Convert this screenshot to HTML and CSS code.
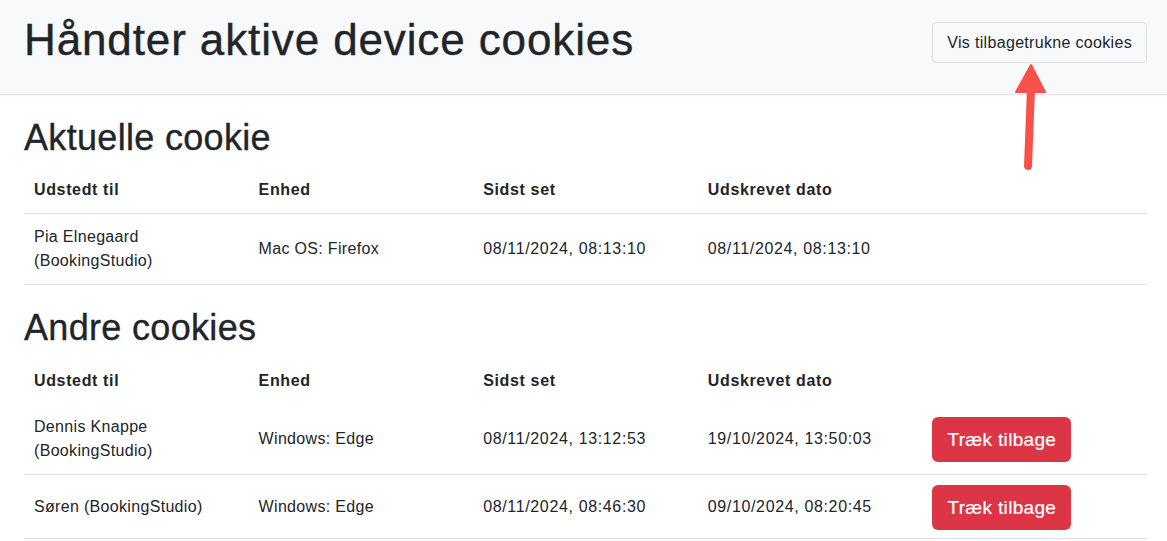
FILE: index.html
```html
<!DOCTYPE html>
<html lang="da">
<head>
<meta charset="utf-8">
<title>Håndter aktive device cookies</title>
<link rel="stylesheet" href="styles.css">
</head>
<body>
<header class="topbar">
  <h1 class="page-title">Håndter aktive device cookies</h1>
  <button class="btn btn-light">Vis tilbagetrukne cookies</button>
</header>
<main class="content">
  <h2 class="section-title first">Aktuelle cookie</h2>
  <table class="cookie-table current">
    <thead>
      <tr><th>Udstedt til</th><th>Enhed</th><th>Sidst set</th><th>Udskrevet dato</th><th></th></tr>
    </thead>
    <tbody>
      <tr><td>Pia Elnegaard (BookingStudio)</td><td>Mac OS: Firefox</td><td class="num">08/11/2024, 08:13:10</td><td class="num">08/11/2024, 08:13:10</td><td></td></tr>
    </tbody>
  </table>
  <h2 class="section-title">Andre cookies</h2>
  <table class="cookie-table other">
    <thead>
      <tr><th>Udstedt til</th><th>Enhed</th><th>Sidst set</th><th>Udskrevet dato</th><th></th></tr>
    </thead>
    <tbody>
      <tr><td>Dennis Knappe (BookingStudio)</td><td>Windows: Edge</td><td class="num">08/11/2024, 13:12:53</td><td class="num">19/10/2024, 13:50:03</td><td class="action"><button class="btn btn-danger">Træk tilbage</button></td></tr>
      <tr><td>Søren (BookingStudio)</td><td>Windows: Edge</td><td class="num">08/11/2024, 08:46:30</td><td class="num">09/10/2024, 08:20:45</td><td class="action"><button class="btn btn-danger">Træk tilbage</button></td></tr>
    </tbody>
  </table>
</main>
<svg class="arrow" width="60" height="120" viewBox="0 0 60 120" aria-hidden="true">
  <line x1="28" y1="101" x2="31" y2="24" stroke="#f9514a" stroke-width="8" stroke-linecap="round"/>
  <polygon points="31,0 45,27 16,27" fill="#f9514a" stroke="#f9514a" stroke-width="2" stroke-linejoin="round"/>
</svg>
</body>
</html>
```
FILE: styles.css
```css
* { box-sizing: border-box; }

html, body {
  margin: 0;
  padding: 0;
}

body {
  position: relative;
  font-family: "Liberation Sans", Arial, sans-serif;
  font-size: 16px;
  line-height: 24px;
  color: #212529;
  background: #ffffff;
  letter-spacing: 0.02em;
}

.topbar {
  display: flex;
  justify-content: space-between;
  align-items: flex-start;
  height: 95px;
  padding: 14px 20px 0 24px;
  background: #f8f9fa;
  border-bottom: 1px solid #e6e8ea;
  box-shadow: 0 1px 2px rgba(0, 0, 0, 0.05);
}

.page-title {
  margin: 0;
  font-size: 44px;
  line-height: 1.2;
  font-weight: 400;
  letter-spacing: 0.02em;
  -webkit-text-stroke: 0.4px #212529;
}

.btn {
  font-family: inherit;
  letter-spacing: inherit;
  cursor: pointer;
  border-radius: 4px;
}

.btn-light {
  margin-top: 8px;
  height: 41px;
  padding: 0 14px;
  font-size: 16px;
  line-height: 24px;
  color: #212529;
  background: #f8f9fa;
  border: 1px solid #dcdfe2;
}

.btn-danger {
  width: 139px;
  height: 45px;
  padding: 0;
  font-size: 19px;
  line-height: 28px;
  color: #ffffff;
  background: #dc3545;
  border: 0;
  border-radius: 6px;
  -webkit-text-stroke: 0.2px #ffffff;
}

.content {
  padding: 0 20px 0 24px;
}

.section-title {
  margin: 21px 0 9px;
  font-size: 36px;
  line-height: 1.2;
  font-weight: 400;
  -webkit-text-stroke: 0.35px #212529;
}

.section-title.first {
  margin-top: 21px;
  margin-bottom: 8px;
}

.cookie-table {
  width: 100%;
  table-layout: fixed;
  border-collapse: collapse;
}

.cookie-table th,
.cookie-table td {
  padding: 11px 10px;
  text-align: left;
  vertical-align: middle;
}

.cookie-table th {
  font-weight: 700;
  letter-spacing: 0.04em;
}

.cookie-table td.num {
  letter-spacing: 0.04em;
}

.cookie-table.current thead th {
  border-bottom: 1px solid #dee2e6;
}

.cookie-table tbody td {
  border-bottom: 1px solid #dee2e6;
}

.cookie-table td.action {
  padding-top: 10px;
  padding-bottom: 9px;
}

.cookie-table.other tbody tr:last-child td.action {
  padding-top: 10px;
  padding-bottom: 8px;
}

.arrow {
  position: absolute;
  left: 1000px;
  top: 65px;
  overflow: visible;
}
```
